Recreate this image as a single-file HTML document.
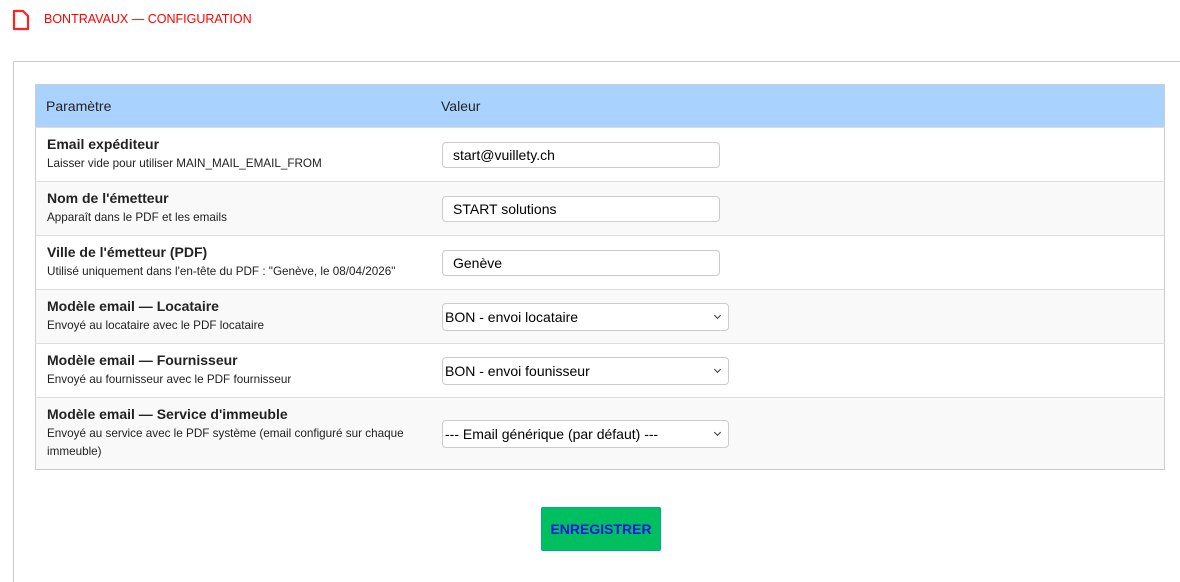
<!DOCTYPE html><html><head><style>
body{margin:0;background:#fff;font-family:"Liberation Sans",sans-serif;width:1180px;height:554px;overflow:hidden;position:relative}
.title{position:absolute;left:44px;top:12px;color:#f00;font-size:12.5px}
.ico{position:absolute;left:12px;top:9px}
.panel{position:absolute;left:13px;top:61px;width:1180px;height:520px;border-top:1px solid #ccc;border-left:1px solid #ccc}
table{position:absolute;left:35px;top:84px;width:1130px;border-collapse:collapse;border:1px solid #ccc;font-size:13px}
th{background:#aad2fe;height:42px;text-align:left;font-weight:normal;font-size:14px;color:#222;padding:0 0 0 10px}
td{border-top:1px solid #ddd;padding:0 0 0 11px;height:53px;vertical-align:middle}
tr:nth-child(odd) td{background:#f9f9f9}
b{font-size:14px;color:#222;display:block;margin-bottom:3px}
small{font-size:11.7px;color:#222;line-height:18px}
.in{width:266px;height:24px;border:1px solid #ccc;border-radius:4px;padding-left:10px;font-size:14px;line-height:24px;background:#fff}
.sel{width:283px;height:26px;border:1px solid #ccc;border-radius:4px;padding-left:2px;font-size:14px;line-height:26px;background:#fff;position:relative}
.sel:after{content:"";position:absolute;right:8px;top:9px;width:4px;height:4px;border-right:1.5px solid #333;border-bottom:1.5px solid #333;transform:rotate(45deg)}
.btn{position:absolute;left:541px;top:507px;width:118px;height:42px;background:#00bf5f;border:1px solid #0a9;border-radius:2px;color:#1515e0;font-weight:bold;font-size:14px;text-align:center;line-height:42px}
</style></head><body>
<svg class="ico" width="18" height="22" viewBox="0 0 18 22"><path d="M2 2h9l5 5v13H2z" fill="none" stroke="#f22" stroke-width="2.2" stroke-linejoin="round"/></svg>
<div class="title">BONTRAVAUX — CONFIGURATION</div>
<div class="panel"></div>
<table>
<tr><th style="width:385px">Paramètre</th><th>Valeur</th></tr>
<tr><td><b>Email expéditeur</b><small>Laisser vide pour utiliser MAIN_MAIL_EMAIL_FROM</small></td><td><div class="in">start@vuillety.ch</div></td></tr>
<tr><td><b>Nom de l'émetteur</b><small>Apparaît dans le PDF et les emails</small></td><td><div class="in">START solutions</div></td></tr>
<tr><td><b>Ville de l'émetteur (PDF)</b><small>Utilisé uniquement dans l'en-tête du PDF : "Genève, le 08/04/2026"</small></td><td><div class="in">Genève</div></td></tr>
<tr><td><b>Modèle email — Locataire</b><small>Envoyé au locataire avec le PDF locataire</small></td><td><div class="sel">BON - envoi locataire</div></td></tr>
<tr><td><b>Modèle email — Fournisseur</b><small>Envoyé au fournisseur avec le PDF fournisseur</small></td><td><div class="sel">BON - envoi founisseur</div></td></tr>
<tr><td style="height:71px"><b>Modèle email — Service d'immeuble</b><small>Envoyé au service avec le PDF système (email configuré sur chaque<br>immeuble)</small></td><td><div class="sel">--- Email générique (par défaut) ---</div></td></tr>
</table>
<div class="btn">ENREGISTRER</div>
</body></html>
